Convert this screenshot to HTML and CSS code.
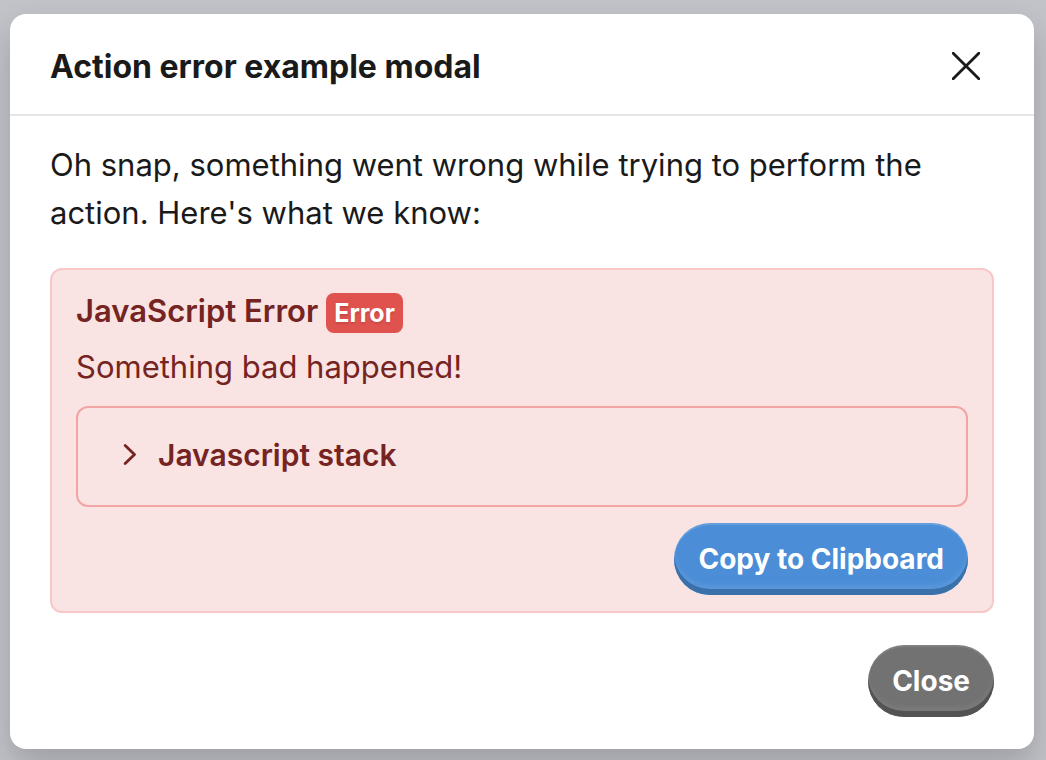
FILE: index.html
```html
<!DOCTYPE html>
<html lang="en">
<head>
<meta charset="utf-8">
<meta name="viewport" content="width=device-width, initial-scale=1">
<title>Action error example modal</title>
<link rel="stylesheet" href="styles.css">
</head>
<body>
<section class="modal" role="dialog" aria-labelledby="modal-title">
  <header class="modal-header">
    <h1 class="modal-title" id="modal-title">Action error example modal</h1>
    <button class="icon-button" type="button" aria-label="Dismiss">
      <svg class="icon-close" viewBox="0 0 28 28" aria-hidden="true"><path d="M1.200 1.200 26.800 26.800M26.800 1.200 1.200 26.800"/></svg>
    </button>
  </header>
  <div class="modal-body">
    <p class="intro">Oh snap, something went wrong while trying to perform the action. Here's what we know:</p>
    <div class="alert" role="alert">
      <div class="alert-heading">
        <h2 class="alert-title">JavaScript Error</h2>
        <span class="badge">Error</span>
      </div>
      <p class="alert-message">Something bad happened!</p>
      <button class="disclosure" type="button" aria-expanded="false">
        <svg class="icon-chevron" viewBox="0 0 14 22" aria-hidden="true"><path d="M3.200 1.500 12.500 10.500 3.200 19.500"/></svg>
        <span>Javascript stack</span>
      </button>
      <div class="actions">
        <button class="button button-primary" type="button">Copy to Clipboard</button>
      </div>
    </div>
    <footer class="actions modal-footer">
      <button class="button button-neutral" type="button">Close</button>
    </footer>
  </div>
</section>
</body>
</html>
```
FILE: styles.css
```css
* { box-sizing: border-box; }
body {
  margin: 0;
  padding: 14px 12px 11px 10px;
  background: #c2c3c8;
  font-family: Inter, "Liberation Sans", sans-serif;
  font-size: 31px;
  line-height: 48px;
  color: #1a1a1a;
}
h1, h2, p { margin: 0; }
button { font: inherit; color: inherit; cursor: pointer; }
.modal {
  background: #fff;
  border-radius: 16px;
  box-shadow: 0 16px 32px rgba(20, 20, 30, 0.2);
}
.modal-header {
  display: flex;
  align-items: center;
  justify-content: space-between;
  padding: 28px 40px 24px;
  border-bottom: 2px solid #e5e5e7;
}
.modal-title { padding-top: 2px; font-size: 32px; line-height: 46px; font-weight: 700; }
.icon-button {
  display: flex;
  padding: 10px 14px;
  border: 0;
  background: none;
}
.icon-close { width: 28px; height: 28px; }
.icon-close path, .icon-chevron path {
  fill: none;
  stroke: currentColor;
  stroke-width: 2.8;
  stroke-linecap: round;
  stroke-linejoin: round;
}
.modal-body { padding: 25px 40px 32px; }
.intro { margin-bottom: 31px; }
.alert {
  padding: 17px 24px 16px;
  border: 2px solid #f6c9c8;
  border-radius: 12px;
  background: #f9e3e3;
  color: #752422;
}
.alert-heading { display: flex; align-items: flex-end; gap: 8px; margin-bottom: 8px; }
.alert-title { font-size: 31px; font-weight: 600; }
.badge {
  margin-bottom: 2px;
  padding: 0 8px;
  border-radius: 8px;
  background: #df524d;
  color: #fff;
  font-size: 25px;
  line-height: 40px;
  font-weight: 700;
  text-shadow: 0 2px 2px rgba(0, 0, 0, 0.1);
}
.alert-message { margin-bottom: 15px; }
.disclosure {
  display: flex;
  align-items: center;
  gap: 22px;
  width: 100%;
  padding: 23px 44px 26px;
  border: 2px solid #f2a5a4;
  border-radius: 12px;
  background: none;
  font-size: 30px;
  font-weight: 600;
}
.icon-chevron { width: 14px; height: 22px; }
.actions { display: flex; justify-content: flex-end; margin-top: 16px; }
.modal-footer { margin-top: 32px; }
.button {
  padding: 12px 24px;
  border: 0;
  border-radius: 36px;
  color: #fff;
  font-size: 28px;
  font-weight: 700;
}
.button-primary {
  background: #4b8ed7;
  box-shadow: inset 0 2px rgba(255, 255, 255, 0.15), inset 0 -6px #3b71ab, inset 0 -10px 4px rgba(255, 255, 255, 0.08);
}
.button-neutral {
  background: #727272;
  box-shadow: inset 0 2px rgba(255, 255, 255, 0.1), inset 0 -6px #535353, inset 0 -10px 4px rgba(255, 255, 255, 0.06);
}
```
